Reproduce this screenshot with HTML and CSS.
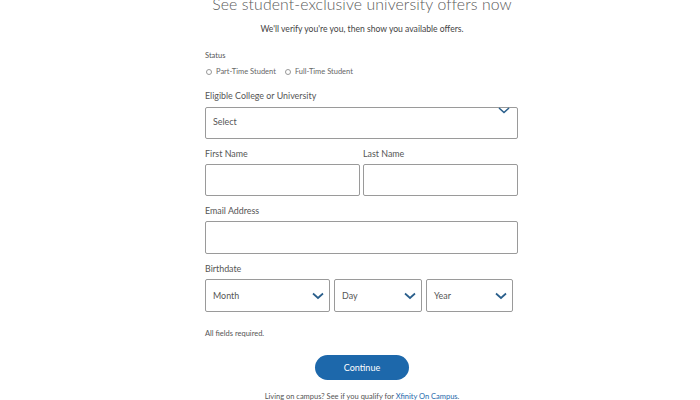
FILE: index.html
```html
<!DOCTYPE html>
<html>
<head>
<meta charset="utf-8">
<link rel="stylesheet" href="styles.css">
</head>
<body>
<div class="page">
  <header class="head">
    <h1 class="title">See student-exclusive university offers now</h1>
    <p class="sub">We'll verify you're you, then show you available offers.</p>
  </header>
  <form class="form">
    <div class="small-label">Status</div>
    <div class="radios">
      <label class="radio"><span class="dot"></span>Part-Time Student</label>
      <label class="radio"><span class="dot"></span>Full-Time Student</label>
    </div>
    <div class="label l-college">Eligible College or University</div>
    <div class="box select-college">
      <span class="val">Select</span>
      <svg class="chev chev-top" width="12" height="7" viewBox="0 0 12 7"><path d="M1 1 L6 5.5 L11 1" fill="none" stroke="#2a5f8c" stroke-width="1.6"/></svg>
    </div>
    <div class="row2">
      <div class="col">
        <div class="label">First Name</div>
        <div class="box"></div>
      </div>
      <div class="col">
        <div class="label">Last Name</div>
        <div class="box"></div>
      </div>
    </div>
    <div class="label">Email Address</div>
    <div class="box email"></div>
    <div class="label">Birthdate</div>
    <div class="row3">
      <div class="box sel month"><span class="val">Month</span><svg class="chev" width="12" height="8" viewBox="0 0 12 8"><path d="M1 1.5 L6 6 L11 1.5" fill="none" stroke="#2a5f8c" stroke-width="1.7"/></svg></div>
      <div class="box sel day"><span class="val">Day</span><svg class="chev" width="12" height="8" viewBox="0 0 12 8"><path d="M1 1.5 L6 6 L11 1.5" fill="none" stroke="#2a5f8c" stroke-width="1.7"/></svg></div>
      <div class="box sel year"><span class="val">Year</span><svg class="chev" width="12" height="8" viewBox="0 0 12 8"><path d="M1 1.5 L6 6 L11 1.5" fill="none" stroke="#2a5f8c" stroke-width="1.7"/></svg></div>
    </div>
    <div class="small-label req">All fields required.</div>
  </form>
  <div class="actions">
    <button class="btn" type="button">Continue</button>
  </div>
  <p class="foot">Living on campus? See if you qualify for <a href="#">Xfinity On Campus</a>.</p>
</div>
</body>
</html>
```

FILE: styles.css
```css
* { box-sizing: border-box; }
html, body { margin: 0; padding: 0; background: #fff; }
body {
  font-family: Lato, "Open Sans", "Liberation Sans", sans-serif;
  color: #333;
  overflow: hidden;
  height: 400px;
}
.page { width: 700px; }
.head {
  padding-left: 24px;
  text-align: center;
  margin-top: -7px;
}
.title {
  margin: 0;
  font-weight: 300;
  font-size: 15.8px;
  line-height: 22px;
  color: #5a5a5a;
  letter-spacing: 0.1px;
}
.sub {
  margin: 8px 0 0;
  font-size: 8.6px;
  line-height: 12px;
  color: #444;
}
.form {
  margin-left: 205px;
  width: 313px;
  margin-top: 16px;
}
.small-label {
  font-size: 7.5px;
  line-height: 10px;
  color: #555;
}
.radios {
  display: flex;
  gap: 8px;
  margin-top: 6px;
  height: 10px;
}
.radio {
  display: flex;
  align-items: center;
  gap: 4px;
  font-size: 7.5px;
  line-height: 10px;
  color: #666;
}
.dot {
  width: 6px;
  height: 6px;
  border: 1px solid #999;
  border-radius: 50%;
  margin-left: 1px;
}
.label {
  font-size: 8.9px;
  line-height: 12px;
  color: #555;
  margin-top: 9px;
  margin-bottom: 4px;
}
.l-college { margin-top: 13px; margin-bottom: 5px; }
.box {
  position: relative;
  border: 1px solid #9a9a9a;
  border-radius: 2px;
  height: 32px;
  background: #fff;
}
.select-college {
  height: 32px;
  display: flex;
  align-items: center;
  padding-left: 7px;
  padding-bottom: 3px;
}
.val {
  font-size: 8.9px;
  color: #555;
}
.chev-top {
  position: absolute;
  right: 7px;
  top: -1px;
}
.row2 {
  display: flex;
  gap: 3px;
}
.col { flex: 1; }
.email { height: 33px; }
.row3 {
  display: flex;
  gap: 4px;
}
.sel {
  display: flex;
  align-items: center;
  justify-content: space-between;
  padding: 0 5px 0 7px;
  height: 33px;
}
.month { width: 125px; }
.day { width: 88px; }
.year { width: 87px; }
.req { margin-top: 17px; }
.actions {
  display: flex;
  justify-content: center;
  padding-left: 24px;
  margin-top: 16px;
}
.btn {
  width: 94px;
  height: 25px;
  border: none;
  border-radius: 13px;
  background: #1d68ab;
  color: #fff;
  font-family: inherit;
  font-size: 9px;
  padding: 0;
}
.foot {
  margin: 12px 0 0;
  text-align: center;
  padding-left: 24px;
  font-size: 7.5px;
  line-height: 10px;
  color: #555;
}
.foot a { color: #1d68ab; text-decoration: none; }
```
